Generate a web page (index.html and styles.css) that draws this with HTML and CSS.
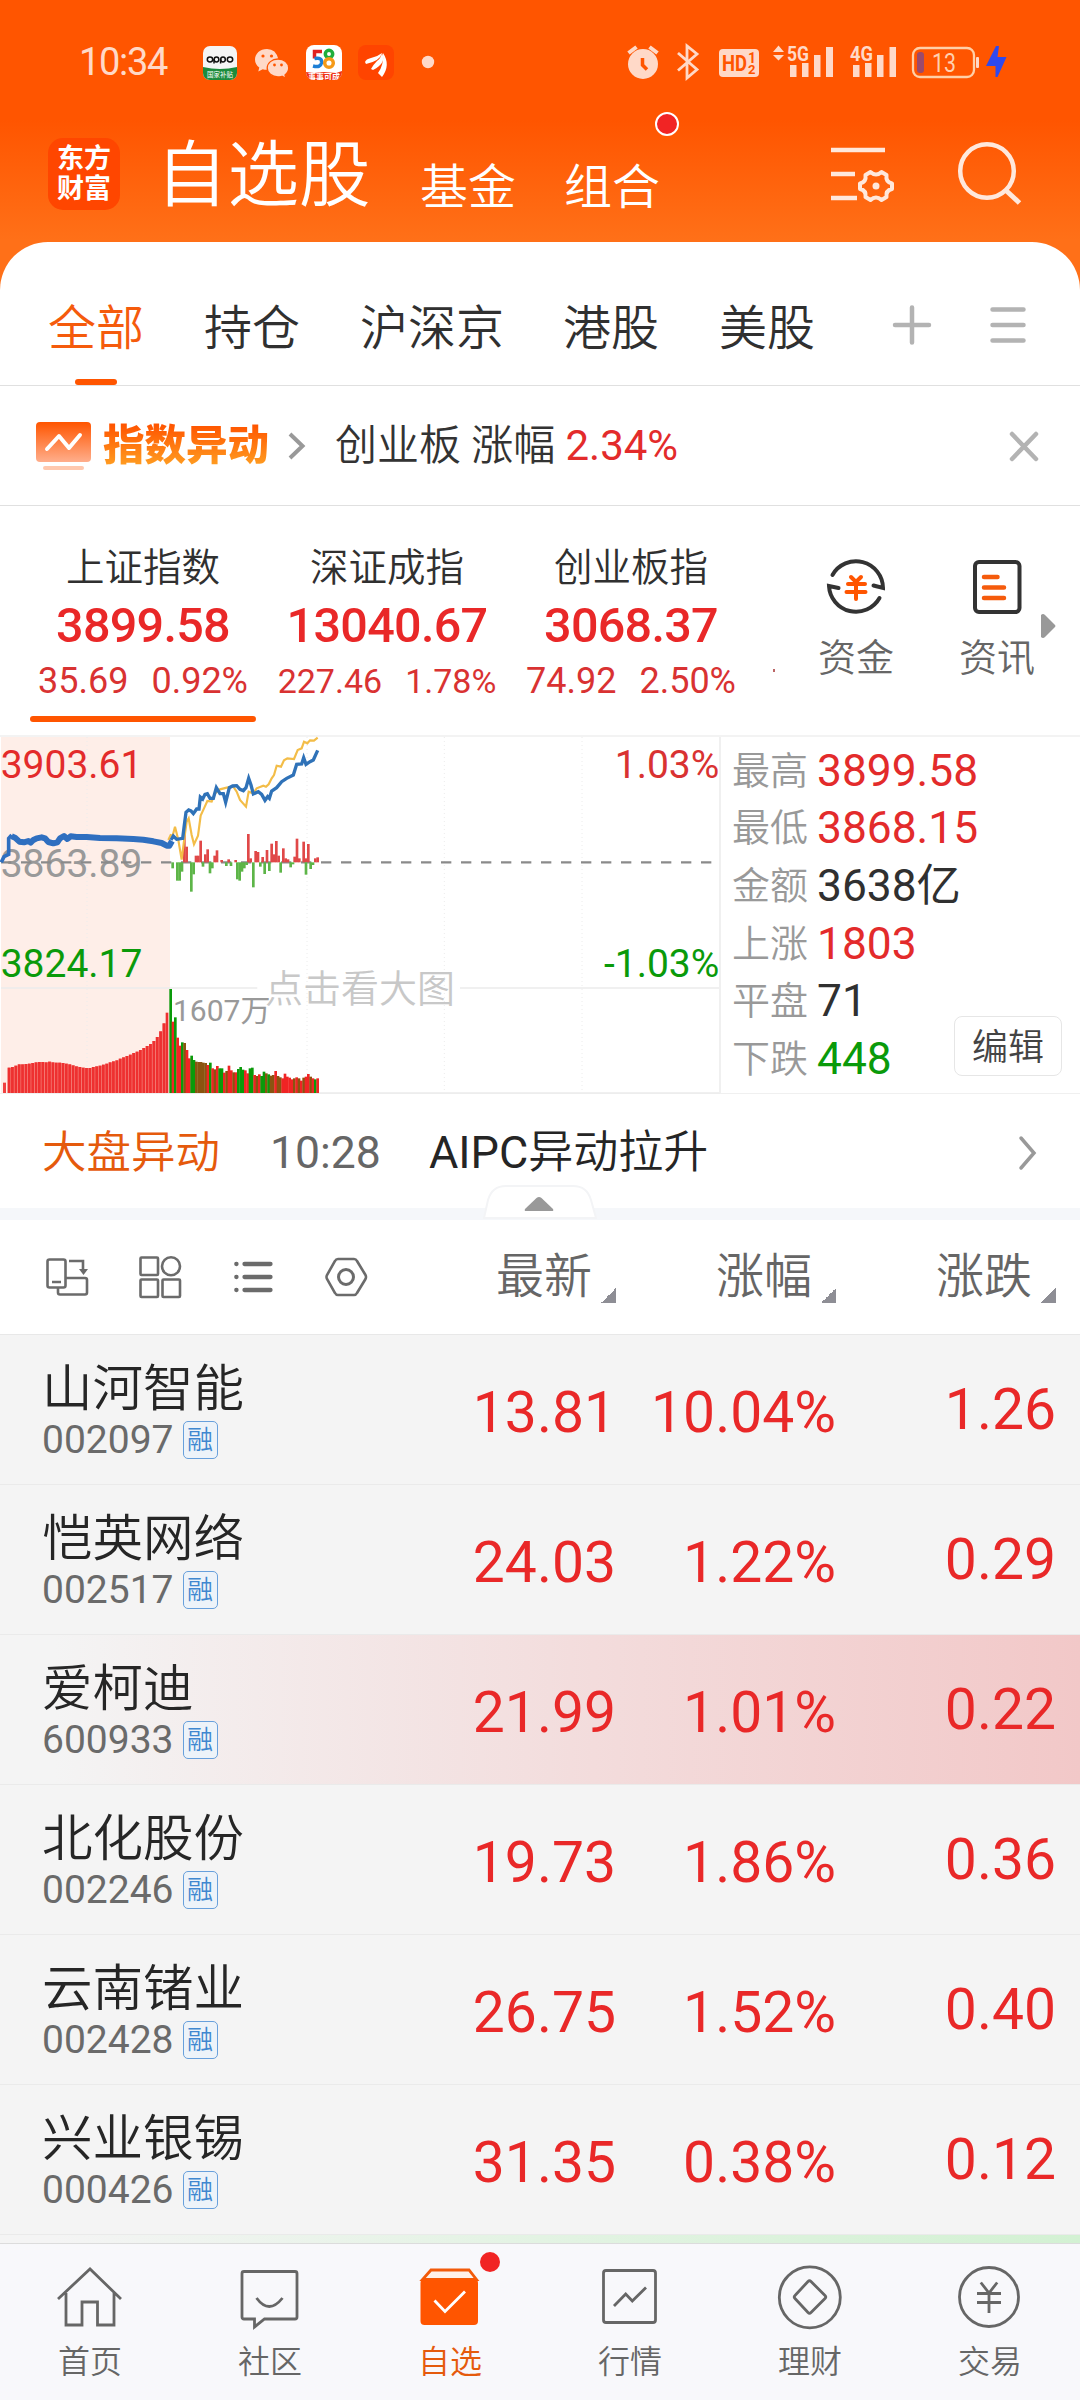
FILE: index.html
```html
<!DOCTYPE html>
<html lang="zh-CN">
<head>
<meta charset="utf-8">
<title>自选股</title>
<link rel="stylesheet" href="styles.css">
</head>
<body>
<div class="screen">
  <div class="statusbar">
    <span class="clock">10:34</span>
    <svg class="status-left" width="240" height="40" viewBox="200 42 240 40">
      <defs><clipPath id="c1"><rect x="203" y="46" width="34" height="34" rx="7"/></clipPath><clipPath id="c2"><rect x="306" y="45" width="36" height="35" rx="8"/></clipPath></defs>
      <g clip-path="url(#c1)"><rect x="203" y="46" width="34" height="34" fill="#f5f5f5"/><path d="M203 67q17 4 34 0v14h-34z" fill="#1c8b3c"/>
      <g fill="none" stroke="#111" stroke-width="1.5"><ellipse cx="210" cy="59.5" rx="2.7" ry="2.4"/><ellipse cx="216.5" cy="59.5" rx="2.3" ry="2.4"/><ellipse cx="223" cy="59.5" rx="2.3" ry="2.4"/><ellipse cx="230" cy="59.5" rx="2.7" ry="2.4"/><path d="M214 59v4.500M220.600 59v4.500"/></g>
      <text x="220" y="76.500" font-size="6.500" text-anchor="middle" fill="#fff" font-weight="400">国家补贴</text></g>
      <g fill="#ffd9c8"><path d="M267 49c-7 0-12 4.700-12 10.500 0 3.300 1.600 6.200 4.300 8.100l-1 4 4.400-2.400q2 .6 4.300.6 6.700 0 11.500-10.300Q276 49 267 49z"/><path d="M278 59c6 0 10.700 4 10.700 9 0 2.800-1.500 5.200-3.700 6.900l.9 3.400-3.900-2q-1.800.6-4 .6c-6 0-10.800-3.900-10.800-8.900s4.800-9 10.800-9z" stroke="#ff5500" stroke-width="1.300"/></g>
      <g fill="#ff5500"><circle cx="263" cy="56" r="1.600"/><circle cx="271.500" cy="56" r="1.600"/><circle cx="274.500" cy="65" r="1.400"/><circle cx="281.500" cy="65" r="1.400"/></g>
      <g clip-path="url(#c2)"><rect x="306" y="45" width="36" height="36" fill="#fff"/><g fill="none" stroke-width="3.500"><path d="M322 51.500h-7.500v7" stroke="#e02020"/><path d="M314.500 58.500q8-1.500 7 4.500-1 5-8.500 3" stroke="#1d7fd6"/><circle cx="329" cy="54" r="3.700" stroke="#1fae3c"/><circle cx="329" cy="63" r="4.300" stroke="#f59a17"/></g><path d="M306 72l8 1 10-1 12 1 6-2v11h-36z" fill="#f03418"/><text x="324" y="79.500" font-size="8" font-weight="700" text-anchor="middle" fill="#fff">事事可成</text></g>
      <rect x="358" y="45" width="36" height="35" rx="8" fill="#ff4400"/><g fill="#fff"><path d="M365 62q1-3 6-4 6-1 11-5-2 8-16 11z"/><path d="M371 69q2-4 6-8 4-3 5-8 5 10-9 17z"/><path d="M378 73q6-8 5-20 8 12-1 24z"/></g>
      <circle cx="428" cy="62" r="6.200" fill="#ffd9c8"/>
    </svg>
    <svg class="status-right" width="390" height="40" viewBox="625 42 390 40">
      <g fill="#ffd9c8"><circle cx="643" cy="64" r="15"/><g stroke="#ffd9c8" stroke-width="4"><path d="M628.500 53l8-6M657.500 53l-8-6"/></g></g>
      <path d="M642.500 58v7l4.500 4.500" fill="none" stroke="#ff5500" stroke-width="3.500"/>
      <path d="M678 53l19 16.500-10 8.500V46l10 8-19 16.500" fill="none" stroke="#ffd9c8" stroke-width="2.800"/>
      <rect x="719" y="49" width="40" height="28" rx="4" fill="#ffd9c8"/><g fill="#ff5500" font-weight="700"><text x="722" y="71" font-size="22" textLength="25" lengthAdjust="spacingAndGlyphs">HD</text><text x="748" y="63" font-size="14">1</text><text x="748" y="74" font-size="13">2</text></g>
      <g fill="#ffd9c8"><path d="M773 52l5.500-6.500 5.500 6.500zM773 55l5.500 5.500 5.500-5.500z"/>
      <g font-size="21" font-weight="700"><text x="787" y="61" textLength="22" lengthAdjust="spacingAndGlyphs">5G</text><text x="850" y="61" textLength="23" lengthAdjust="spacingAndGlyphs">4G</text></g>
      <path d="M790 65h6.500v12h-6.500zM802 63h6.500v14h-6.500zM814 55h6.500v22h-6.500zM826 47h7v30h-7zM853 65h6.500v12h-6.500zM865 63h6.500v14h-6.500zM877 55h6.500v22h-6.500zM889.500 47h6.500v30h-6.500z"/><rect x="976" y="57" width="3" height="11" rx="1"/></g>
      <rect x="913" y="48" width="61" height="29" rx="7" fill="none" stroke="#ffd0a8" stroke-width="2.300"/>
      <rect x="917" y="52" width="7" height="21" rx="3" fill="#9c4a6b"/>
      <text x="932" y="72" font-size="25" fill="#ffd0b0" textLength="24" lengthAdjust="spacingAndGlyphs">13</text>
      <path d="M996 46l-10 20h9.500v11h2l9-20h-9l1.500-11z" fill="#2f49ee"/>
    </svg>
  </div>
  <header class="titlebar">
    <div class="logo"><span>东方</span><span>财富</span></div>
    <h1 class="title">自选股</h1>
    <span class="subtitle fund">基金</span>
    <span class="subtitle combo">组合<i class="badge"></i></span>
    <svg class="head-icons" width="196" height="80" viewBox="828 134 196 80" fill="none" stroke="#ffe8dc" stroke-width="4.500">
      <path d="M831 150h54M831 174h24M831 198h26"/>
      <path d="M870.500 172 Q876 177 881.500 172 L886.500 175 Q885.500 182 892 183.500 V189 Q885.500 190.500 886.500 197 L881.500 200 Q876 195 870.500 200 L865.500 197 Q866.500 190.500 860 189 V183.500 Q866.500 182 865.500 175 Z" stroke-width="4" stroke-linejoin="round"/>
      <circle cx="876" cy="186" r="3.500" fill="#ffe8dc" stroke="none"/>
      <circle cx="987" cy="171" r="26.800"/><path d="M1005.500 190l14 13" stroke-width="5"/>
    </svg>
  </header>

  <main class="panel">
    <nav class="tabs">
      <span class="tab active">全部</span><span class="tab">持仓</span><span class="tab">沪深京</span><span class="tab">港股</span><span class="tab">美股</span>
      <svg class="tab-tools" width="138" height="44" viewBox="891 303.500 138 44" fill="none" stroke="#b3b3b3" stroke-width="4.500" stroke-linecap="round"><path d="M895 325.500h34M912 308v35M992.500 310h31M992.500 325.500h31M992.500 341h31"/></svg>
    </nav>

    <div class="alert">
      <svg width="56" height="52" viewBox="0 0 56 52"><defs><linearGradient id="ga" x2="0" y2="1"><stop stop-color="#ff5500"/><stop offset="1" stop-color="#ffae8c"/></linearGradient></defs><rect x="0" y="2" width="55" height="40" rx="4" fill="url(#ga)"/><path d="M11 29l12-13 10 12 11-13" fill="none" stroke="#fff" stroke-width="4" stroke-linecap="round" stroke-linejoin="round"/><rect x="7" y="46" width="41" height="4" rx="2" fill="#ffc8ae"/></svg>
      <span class="alert-name">指数异动</span>
      <svg class="alert-chev" width="18" height="30" viewBox="0 0 18 30" fill="none" stroke="#999" stroke-width="4"><path d="M2 3l12.500 12L2 27"/></svg>
      <span class="alert-text">创业板 涨幅 <b>2.34%</b></span>
      <svg class="alert-close" width="32" height="32" viewBox="0 0 32 32" stroke="#b3b3b3" stroke-width="4.500" stroke-linecap="round"><path d="M4 4l24 25M28 4L4 29"/></svg>
    </div>

    <section class="indices">
      <div class="index current"><span class="iname">上证指数</span><strong>3899.58</strong><span class="idiff"><i>35.69</i><i>0.92%</i></span></div>
      <div class="index"><span class="iname">深证成指</span><strong>13040.67</strong><span class="idiff small"><i>227.46</i><i>1.78%</i></span></div>
      <div class="index"><span class="iname">创业板指</span><strong>3068.37</strong><span class="idiff"><i>74.92</i><i>2.50%</i></span></div>
      <i class="more-edge"></i>
      <div class="tool funds">
        <svg width="64" height="64" viewBox="0 0 64 64" fill="none" stroke="#333" stroke-width="4" stroke-linecap="round"><path d="M8.500 20a27 27 0 0 1 50.500 13l-9.500-2.500M55.500 43A27 27 0 0 1 5 31l9.500 2"/><g stroke="#ff5500"><path d="M27 22l5 5 5-5M24 29h17M22.500 37h19M32 28v16"/></g></svg>
        <span>资金</span>
      </div>
      <div class="tool news">
        <svg width="64" height="64" viewBox="0 0 64 64" fill="none" stroke="#333" stroke-width="4" stroke-linecap="round"><rect x="10" y="7" width="44.500" height="50" rx="4"/><path d="M19 22h13.500M19 32.500h20M19 43h20" stroke="#f55b0c" stroke-width="4.500"/></svg>
        <span>资讯</span>
      </div>
      <svg class="more" width="16" height="26" viewBox="0 0 16 26"><path d="M1 2q2-2 4 0l10 10q1 1 0 2L5 24q-2 2-4 0z" fill="#999"/></svg>
    </section>

    <section class="market">
      <svg class="chart" width="720" height="359" viewBox="0 30 2160 1077">
        <rect x="3" y="36" width="507" height="1068" fill="#feeee8"/>
        <g stroke="#ececec" stroke-width="3" stroke-dasharray="3 9"><path d="M261 36V1100M921 36V1100M1333 36V1100M1746 36V1100"/></g>
        <path d="M3 789H772M1380 789H2160M510 1104H2160" stroke="#ececec" stroke-width="5"/>
        <text x="1080" y="832" class="hint" text-anchor="middle">点击看大图</text>
        <g class="axis"><text x="2" y="158" fill="#e32b2b">3903.61</text><text x="2" y="456" fill="#999">3863.89</text><text x="2" y="755" fill="#0a9a0a">3824.17</text><text x="2158" y="158" text-anchor="end" fill="#d93232">1.03%</text><text x="2158" y="755" text-anchor="end" fill="#0a9a0a">-1.03%</text></g>
        <path d="M3 412H2136" stroke="#8a8a8a" stroke-width="7" stroke-dasharray="31 29"/>
        <g id="bars"></g>
        <text x="519" y="887" class="vol">1607万</text>
        <polyline fill="none" stroke="#f3bd48" stroke-width="6.500" points="505,345 512,330 518,332 525,305 535,345 545,404 553,340 560,290 566,280 575,330 582,358 594,332 602,272 612,250 622,228 635,230 645,205 660,193 680,188 700,185 710,200 720,225 738,245 746,200 760,205 770,190 790,182 798,185 806,178 815,160 822,150 830,122 843,125 852,106 862,100 882,102 893,75 905,70 912,50 922,55 930,46 942,47 953,38"/>
        <polyline fill="none" stroke="#2f72b8" stroke-width="10" points="513,345 520,333 530,343 548,340 553,300 558,262 566,255 573,258 580,266 590,252 597,252 601,216 608,222 615,208 622,206 630,220 640,220 649,188 660,206 670,206 677,232 688,188 698,183 710,182 720,193 730,197 738,188 746,160 753,180 760,207 775,200 785,208 795,226 803,215 808,220 815,198 830,188 845,170 860,160 880,150 890,118 905,117 911,98 918,118 930,110 940,105 953,76"/>
        <polyline fill="none" stroke="#2f6fc0" stroke-width="18" stroke-linejoin="round" points="35,334 45,338 58,350 72,352 85,348 92,353 100,345 110,340 125,337 135,340 145,351 160,355 172,352 180,340 192,333 202,342 212,334 230,336 260,336 300,339 350,340 400,342 430,344 460,349 485,354 500,362 508,362 516,348"/>
        <path d="M4 412L12 395L26 388V340L35 330" fill="none" stroke="#2f6fc0" stroke-width="11"/>
      </svg>
      <div class="stats">
        <p><span>最高</span><b class="up">3899.58</b></p>
        <p><span>最低</span><b class="up">3868.15</b></p>
        <p><span>金额</span><b>3638亿</b></p>
        <p><span>上涨</span><b class="up">1803</b></p>
        <p><span>平盘</span><b>71</b></p>
        <p><span>下跌</span><b class="down">448</b></p>
        <button class="edit">编辑</button>
      </div>
    </section>

    <div class="flash">
      <span class="ftag">大盘异动</span><span class="ftime">10:28</span><span class="ftext"><b>AIPC</b>异动拉升</span>
      <svg width="20" height="36" viewBox="0 0 20 36" fill="none" stroke="#999" stroke-width="3.500" stroke-linecap="round"><path d="M3 3l13 15L3 33"/></svg>
      <svg class="handle" width="114" height="36" viewBox="0 0 114 36"><path d="M1 34L5 16Q9 2 23 2H90Q104 2 108 16L113 34z" fill="#fff" stroke="#f3f4f6" stroke-width="2"/><path d="M42 25L53.500 14q2.500-2 5 0L70 25q1 2-1 2H43q-2 0-1-2z" fill="#999"/></svg>
    </div>

    <div class="thead">
      <svg width="330" height="48" viewBox="42 1253 330 48" fill="none" stroke="#6b6b6b" stroke-width="2.600">
        <rect x="47.500" y="1259.500" width="18" height="28" rx="2"/><path d="M52 1282h9M69 1261h14v10M66 1278h19q2 0 2 2v12.500q0 2-2 2H60q-2 0-2-2V1288"/><path d="M79 1269h9l-4.500 6z" fill="#6b6b6b" stroke="none"/>
        <rect x="140.500" y="1257.500" width="17.500" height="17.500" rx="1"/><circle cx="171" cy="1266.300" r="9"/><rect x="140.500" y="1279.500" width="17.500" height="17.500" rx="1"/><rect x="162.500" y="1279.500" width="17.500" height="17.500" rx="1"/>
        <g stroke-width="4.300" stroke-linecap="round"><path d="M244.500 1264h26M244.500 1277h26M244.500 1290h26M236.300 1264h.2M236.300 1277h.2M236.300 1290h.2"/></g>
        <path d="M338 1259h16q2 0 3 2l8.500 14q1 2 0 4l-8.500 14q-1 2-3 2h-16q-2 0-3-2l-8-14q-1-2 0-4l8-14q1-2 3-2z"/><circle cx="346" cy="1277" r="7.500" stroke-width="3"/>
      </svg>
      <span class="th">最新</span><span class="th">涨幅</span><span class="th">涨跌</span>
    </div>

    <section class="rows">
      <div class="row"><div class="stock"><em>山河智能</em><span>002097<u>融</u></span></div><b>13.81</b><b>10.04%</b><b class="chg">1.26</b></div>
      <div class="row"><div class="stock"><em>恺英网络</em><span>002517<u>融</u></span></div><b>24.03</b><b>1.22%</b><b class="chg">0.29</b></div>
      <div class="row rise"><div class="stock"><em>爱柯迪</em><span>600933<u>融</u></span></div><b>21.99</b><b>1.01%</b><b class="chg">0.22</b></div>
      <div class="row"><div class="stock"><em>北化股份</em><span>002246<u>融</u></span></div><b>19.73</b><b>1.86%</b><b class="chg">0.36</b></div>
      <div class="row"><div class="stock"><em>云南锗业</em><span>002428<u>融</u></span></div><b>26.75</b><b>1.52%</b><b class="chg">0.40</b></div>
      <div class="row"><div class="stock"><em>兴业银锡</em><span>000426<u>融</u></span></div><b>31.35</b><b>0.38%</b><b class="chg">0.12</b></div>
      <div class="row-edge"></div>
    </section>
  </main>

  <nav class="bottom">
    <a><svg viewBox="0 0 72 72"><path d="M4 37L36 7l31 30M12 31v32h16V40h15.500v23H60V31"/></svg>首页</a>
    <a><svg viewBox="0 0 72 72"><path d="M10 9.500h51q2 0 2 2v43.500q0 2-2 2H30.500L20.500 65v-8H10q-2 0-2-2V11.500q0-2 2-2zM22.500 36q12.500 17 26 0"/></svg>社区</a>
    <a class="on"><svg viewBox="0 0 72 72"><path d="M17 8h38l7.500 9.500H8.500z" fill="#fff1ea" stroke="#f25a0a"/><rect x="6.500" y="17" width="57.500" height="46" rx="4" fill="#ff5500" stroke="none"/><path d="M20.500 38.500L31 49.500l20-20" stroke="#fff"/></svg>自选<i class="dot"></i></a>
    <a><svg viewBox="0 0 72 72"><rect x="9.500" y="8.500" width="52" height="52" rx="2.500"/><path d="M20 44l11.700-12 6.600 7L52 25.500"/></svg>行情</a>
    <a><svg viewBox="0 0 72 72"><circle cx="35.800" cy="35.300" r="30.500"/><path d="M37 19.500l14 14q1.500 1.500 0 3l-14 14q-1.500 1.500-3 0l-13-14q-1.500-1.500 0-3l13-14q1.500-1.500 3 0z"/></svg>理财</a>
    <a><svg viewBox="0 0 72 72"><circle cx="35" cy="35" r="29.500"/><path d="M26.800 20.500L35 31l8.200-10.500M23 31.500h24M23 40.500h24M35 31v20"/></svg>交易</a>
  </nav>
</div>
<script src="chart.js"></script>
</body>
</html>
```
FILE: styles.css
```css
* { box-sizing: border-box; margin: 0; padding: 0; }
body { font-family: Roboto, "Noto Sans CJK SC", sans-serif; background: #fff; }
i, em, u, b { font-style: normal; font-weight: 400; text-decoration: none; }
svg { flex: none; display: block; }
.screen { width: 1080px; height: 2400px; overflow: hidden; display: flex; flex-direction: column; background: linear-gradient(#ff5500 0, #ff5500 120px, #ff7018 240px, #ff7018 300px); }

.statusbar { height: 124px; display: flex; align-items: center; padding: 0 65px 0 79px; }
.clock { width: 121px; font-size: 38px; line-height: 44px; letter-spacing: -1.3px; color: #ffd9c8; }
.status-right { margin-left: auto; }

.titlebar { height: 118px; display: flex; align-items: flex-start; color: #fff; }
.logo { width: 72px; height: 72px; margin: 14px 0 0 48px; border-radius: 15px; background: #ff4600; display: flex; flex-direction: column; align-items: center; justify-content: center; font-size: 27px; line-height: 30px; font-weight: 700; }
.title { width: 220px; margin: 12px 0 0 36px; font-size: 71.500px; line-height: 80px; font-weight: 350; white-space: nowrap; }
.subtitle { font-size: 48px; line-height: 60px; margin-top: 34px; font-weight: 350; position: relative; }
.fund { margin-left: 44px; }
.combo { margin-left: 48px; }
.badge { position: absolute; left: 91px; top: -46px; width: 24px; height: 24px; border-radius: 50%; background: #f12424; border: 2px solid #fff; }
.head-icons { margin: 10px 56px 0 auto; }

.panel { height: 2001px; background: #fff; border-radius: 48px 48px 0 0; overflow: hidden; }
.tabs { height: 144px; border-bottom: 1px solid #e0e0e0; padding: 0 51px 0 48px; display: flex; gap: 60px; font-size: 48px; color: #303030; font-weight: 350; }
.tab { position: relative; line-height: 174px; height: 143px; white-space: nowrap; }
.tab.active { color: #f55b0c; }
.tab:nth-child(3) { margin-right: -1px; }
.tab.active::after { content: ""; position: absolute; left: 27px; bottom: 0; width: 42px; height: 6px; border-radius: 3px; background: #ff5500; }
.tab-tools { margin: 61px 0 0 auto; }

.alert { height: 120px; border-bottom: 1px solid #e0e0e0; display: flex; align-items: center; padding: 0 40px 0 36px; }
.alert-name { margin-left: 11px; width: 168px; font-size: 41.500px; line-height: 60px; font-weight: 900; background: linear-gradient(#ff5500 15%, #ff9a20 80%); -webkit-background-clip: text; color: transparent; white-space: nowrap; }
.alert-chev { margin-left: 17px; }
.alert-text { margin-left: 29px; font-size: 42px; line-height: 60px; color: #333; font-weight: 350; white-space: pre; }
.alert-text b { color: #e32b2b; }
.alert-close { margin-left: auto; }

.indices { height: 229px; display: flex; padding-left: 30px; overflow: hidden; }
.index { width: 226px; margin-right: 18px; display: flex; flex-direction: column; align-items: center; position: relative; white-space: nowrap; color: #d93232; }
.iname { margin-top: 38px; font-size: 38.500px; line-height: 48px; color: #303030; font-weight: 350; }
.index strong { font-size: 48.500px; line-height: 56px; margin-top: 6px; letter-spacing: -.7px; font-weight: 500; color: #e92828; }
.idiff { display: flex; gap: 23px; font-size: 36px; line-height: 42px; margin-top: 6px; }
.idiff.small { font-size: 34px; }
.index.current::after { content: ""; position: absolute; left: 0; bottom: 13px; width: 226px; height: 6px; border-radius: 3px; background: #ff5500; }
.more-edge { width: 2px; height: 3px; margin: 163px 0 0 11px; background: #b66; }
.tool { width: 80px; display: flex; flex-direction: column; align-items: center; padding-top: 49px; font-size: 38px; color: #666; font-weight: 350; white-space: nowrap; }
.tool span { line-height: 48px; margin-top: 15px; }
.funds { margin-left: 41px; }
.news { margin-left: 61px; }
.more { margin: 107px 0 0 3px; }

.market { height: 359px; display: flex; border-top: 2px solid #f3f3f3; border-bottom: 1px solid #f0f0f0; }
.chart { margin-top: -2px; }
.hint { font-size: 114px; font-weight: 350; fill: #c8c8c8; }
.axis { font-size: 117px; }
.vol { font-size: 90px; font-weight: 400; fill: #999; }
.stats { flex: 1; position: relative; margin-left: -1px; border-left: 2px solid #f0f0f0; padding: 5px 0 0 11px; font-weight: 350; }
.stats p { display: flex; height: 57.600px; align-items: center; }
.stats span { width: 85px; font-size: 38px; color: #999; line-height: 50px; }
.stats b { font-size: 44.300px; line-height: 56px; color: #303030; }
.stats .up { color: #e32b2b; }
.stats .down { color: #0a9a0a; }
.edit { position: absolute; right: 18px; top: 279px; width: 108px; height: 60px; border: 1px solid #e6e6e6; border-radius: 8px; background: #fff; padding-top: 3px; font: 350 36px/54px Roboto, "Noto Sans CJK SC", sans-serif; color: #444; }

.flash { height: 126px; border-bottom: 12px solid #f5f7fa; display: flex; align-items: center; padding: 3px 42px 0; position: relative; font-size: 45px; line-height: 60px; white-space: nowrap; }
.ftag { font-size: 44.500px; width: 228px; color: #e55a0c; font-weight: 350; }
.ftime { color: #666; width: 159px; font-size: 44.500px; }
.ftext { color: #252525; font-weight: 350; font-size: 45px; }
.flash > svg:not(.handle) { margin-left: auto; }
.handle { position: absolute; left: 483px; top: 90px; }

.thead { height: 115px; border-bottom: 1px solid #e8e8e8; display: flex; align-items: center; padding: 0 24px 0 42px; font-size: 48px; color: #666; font-weight: 350; }
.thead svg { margin-right: 22px; }
.th { width: 220px; line-height: 60px; text-align: right; padding-right: 24px; position: relative; }
.th::after { content: ""; position: absolute; right: 0; bottom: 4px; width: 15px; height: 15px; background: linear-gradient(135deg, transparent 50%, #8e8e95 50%); }
.thead .th:nth-of-type(1) { width: 222px; }

.rows { background: #f4f4f4; }
.row { height: 150px; border-bottom: 1px solid #eaeaea; display: flex; padding-right: 24px; }
.row b { width: 220px; text-align: right; color: #e92828; font-size: 57px; line-height: 156px; height: 149px; white-space: nowrap; }
.row .chg { line-height: 150px; }
.row.rise { background: linear-gradient(90deg, #f4f4f4 5%, #f3dcdc 55%, #f2c8c8 100%); }
.stock { width: 396px; padding: 24px 0 0 42px; display: flex; flex-direction: column; }
.stock em { font-size: 50.500px; line-height: 60px; color: #262626; font-weight: 350; }
.stock span { display: flex; align-items: center; margin-top: -1px; font-size: 39px; line-height: 44px; color: #6a6a6a; }
.stock u { width: 35px; height: 38px; margin-left: 9px; border: 1.500px solid #68a0dc; border-radius: 5px; background: #edf3f9; color: #3f87d0; font-size: 26px; line-height: 36px; text-align: center; font-weight: 350; }
.row-edge { height: 9px; background: linear-gradient(90deg, #f4f4f4 5%, #e3f3e3 50%, #d3f1d3 100%); }

.bottom { height: 157px; border-top: 1px solid #dcdcdc; background: #f8f8fb; display: flex; }
.bottom a { width: 180px; display: flex; flex-direction: column; align-items: center; padding-top: 18px; position: relative; font-size: 32px; line-height: 40px; color: #666; font-weight: 350; }
.bottom svg { width: 72px; height: 72px; margin-bottom: 8px; fill: none; stroke: #666; stroke-width: 2.800; }
.bottom .on { color: #e55a0c; }
.dot { position: absolute; left: 120px; top: 8px; width: 20px; height: 20px; border-radius: 50%; background: #f12424; }
```
FILE: chart.js
```js
const NS = 'http://www.w3.org/2000/svg';
const host = document.getElementById('bars');
const tint = { r: '#f02424', g: '#0a9a0a', o: '#8a5410' };

function bar(x, y, w, h, fill) {
  const el = document.createElementNS(NS, 'rect');
  for (const [k, v] of Object.entries({ x, y, width: w, height: h, fill })) el.setAttribute(k, v);
  host.appendChild(el);
}

// call auction volume
bar(9, 1073, 9, 31, '#f04040');
const auction = [1028,1026,1022,1018,1018,1017,1016,1014,1012,1011,1011,1012,1010,1012,1013,1013,1014,1016,1018,1021,1024,1026,1028,1029,1029,1026,1024,1022,1019,1016,1012,1009,1006,1001,997,993,989,984,980,975,969,963,957,948,936,919,895];
auction.forEach((t, i) => {
  const x = 23 + i * 10.1;
  bar(x, t, 10, 1104 - t, '#f58a80');
  bar(x, t, 8.4, 1104 - t, '#ee3030');
});
bar(497, 863, 8, 241, '#ee3030');

// minute volume
const minute = 'g792 r890 g877 r938 r962 g952 o954 r975 r1000 g992 g1005 o1010 o1011 o1011 o1013 o1014 r1020 g1013 r1030 o1033 r1023 g1030 g1030 r1043 o1038 r1022 r1036 o1042 r1042 g1032 g1026 g1034 r1036 r1045 g1030 g1028 r1050 o1053 r1048 g1053 g1040 o1045 g1048 o1052 o1050 r1038 o1053 o1057 r1060 r1046 r1055 r1058 r1063 o1060 r1057 o1060 r1067 o1058 r1055 r1047 o1055 r1060 g1063 r1060';
minute.split(' ').forEach((m, i) => {
  const t = +m.slice(1);
  bar(508 + i * 7, t, 8, 1104 - t, tint[m[0]]);
});

// momentum around the previous close
const up = [[549,320],[556,365],[584,392],[591,392],[598,347],[612,388],[619,373],[640,392],[647,376],[661,405],[682,403],[703,405],[741,327],[748,400],[763,378],[770,381],[784,396],[797,375],[811,356],[818,388],[825,348],[832,392],[846,370],[853,400],[860,403],[880,395],[887,341],[894,400],[907,350],[914,400],[921,357],[942,400],[949,397]];
const down = [[514,430],[528,467],[535,467],[542,440],[570,500],[577,448],[605,425],[626,445],[633,430],[675,423],[689,423],[708,463],[715,467],[722,440],[729,430],[736,420],[756,487],[777,425],[790,447],[804,438],[838,443],[868,427],[875,418],[914,449],[928,432],[935,420]];
up.forEach(([x, y]) => bar(x, y, 8, 412 - y, '#e04848'));
down.forEach(([x, y]) => bar(x, 412, 8, y - 412, '#5db548'));
```
